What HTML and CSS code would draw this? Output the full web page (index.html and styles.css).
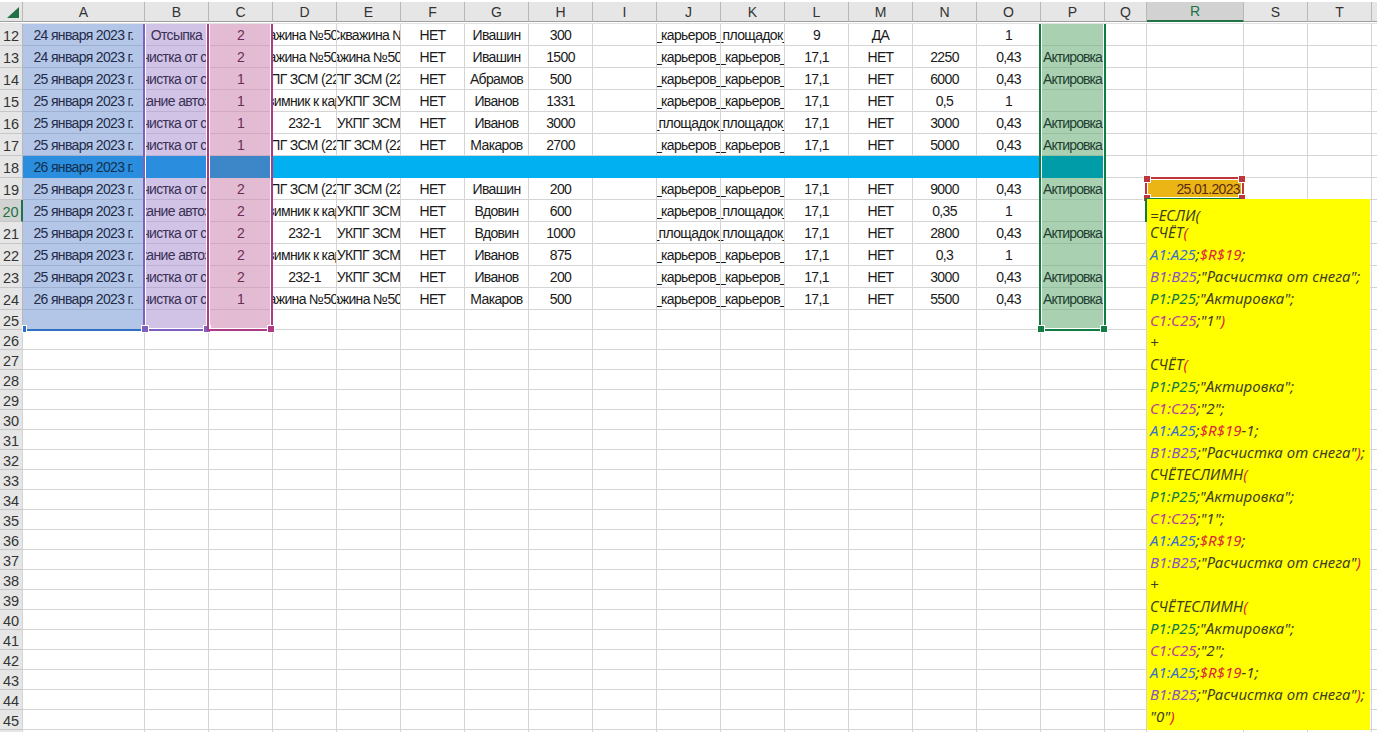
FILE: index.html
```html
<!DOCTYPE html>
<html lang="ru">
<head>
<meta charset="UTF-8"/>
<title>Лист Excel</title>
<link rel="stylesheet" href="styles.css">
</head>
<body>

<div class="sheet">
  <div class="row head">
    <div class="corner"><svg width="12" height="11" viewBox="0 0 12 11"><path d="M12 0V11H0Z" fill="#217346"/></svg></div>
    <div>A</div><div>B</div><div>C</div><div>D</div><div>E</div><div>F</div><div>G</div><div>H</div><div>I</div><div>J</div><div>K</div><div>L</div><div>M</div><div>N</div><div>O</div><div>P</div><div>Q</div><div class="cur">R</div><div>S</div><div>T</div><div></div>
  </div>

  <div class="row"><div class="num">12</div><div class="a">24 января 2023 г.</div><div class="b">Отсыпка</div><div class="c">2</div><div>Скважина №506-11</div><div>Скважина №</div><div>НЕТ</div><div>Ивашин</div><div>300</div><div></div><div>_карьеров_</div><div>_площадок_</div><div>9</div><div>ДА</div><div></div><div>1</div><div class="p"></div><div></div><div></div><div></div><div></div><div></div></div>
  <div class="row"><div class="num">13</div><div class="a">24 января 2023 г.</div><div class="b">Расчистка от снега</div><div class="c">2</div><div>Скважина №506-11</div><div>Скважина №506-11</div><div>НЕТ</div><div>Ивашин</div><div>1500</div><div></div><div>_карьеров_</div><div>_карьеров_</div><div>17,1</div><div>НЕТ</div><div>2250</div><div>0,43</div><div class="p">Актировка</div><div></div><div></div><div></div><div></div><div></div></div>
  <div class="row"><div class="num">14</div><div class="a">25 января 2023 г.</div><div class="b">Расчистка от снега</div><div class="c">1</div><div>УКПГ ЗСМ (22-1)</div><div>УКПГ ЗСМ (22-1)</div><div>НЕТ</div><div>Абрамов</div><div>500</div><div></div><div>_карьеров_</div><div>_карьеров_</div><div>17,1</div><div>НЕТ</div><div>6000</div><div>0,43</div><div class="p">Актировка</div><div></div><div></div><div></div><div></div><div></div></div>
  <div class="row"><div class="num">15</div><div class="a">25 января 2023 г.</div><div class="b">Содержание автозимника</div><div class="c">1</div><div>Автозимник к карьеру</div><div>УКПГ ЗСМ</div><div>НЕТ</div><div>Иванов</div><div>1331</div><div></div><div>_карьеров_</div><div>_карьеров_</div><div>17,1</div><div>НЕТ</div><div>0,5</div><div>1</div><div class="p"></div><div></div><div></div><div></div><div></div><div></div></div>
  <div class="row"><div class="num">16</div><div class="a">25 января 2023 г.</div><div class="b">Расчистка от снега</div><div class="c">1</div><div>232-1</div><div>УКПГ ЗСМ</div><div>НЕТ</div><div>Иванов</div><div>3000</div><div></div><div>_площадок_</div><div>_площадок_</div><div>17,1</div><div>НЕТ</div><div>3000</div><div>0,43</div><div class="p">Актировка</div><div></div><div></div><div></div><div></div><div></div></div>
  <div class="row"><div class="num">17</div><div class="a">25 января 2023 г.</div><div class="b">Расчистка от снега</div><div class="c">1</div><div>УКПГ ЗСМ (22-1)</div><div>УКПГ ЗСМ (22-1)</div><div>НЕТ</div><div>Макаров</div><div>2700</div><div></div><div>_карьеров_</div><div>_карьеров_</div><div>17,1</div><div>НЕТ</div><div>5000</div><div>0,43</div><div class="p">Актировка</div><div></div><div></div><div></div><div></div><div></div></div>
  <div class="row blue"><div class="num">18</div><div class="a">26 января 2023 г.</div><div class="b"></div><div class="c"></div><div></div><div></div><div></div><div></div><div></div><div></div><div></div><div></div><div></div><div></div><div></div><div></div><div class="p"></div><div class="plain"></div><div class="plain"></div><div class="plain"></div><div class="plain"></div><div class="plain"></div></div>
  <div class="row"><div class="num">19</div><div class="a">25 января 2023 г.</div><div class="b">Расчистка от снега</div><div class="c">2</div><div>УКПГ ЗСМ (22-1)</div><div>УКПГ ЗСМ (22-1)</div><div>НЕТ</div><div>Ивашин</div><div>200</div><div></div><div>_карьеров_</div><div>_карьеров_</div><div>17,1</div><div>НЕТ</div><div>9000</div><div>0,43</div><div class="p">Актировка</div><div></div><div class="date">25.01.2023</div><div></div><div></div><div></div></div>
  <div class="row"><div class="num cur">20</div><div class="a">25 января 2023 г.</div><div class="b">Содержание автозимника</div><div class="c">2</div><div>Автозимник к карьеру</div><div>УКПГ ЗСМ</div><div>НЕТ</div><div>Вдовин</div><div>600</div><div></div><div>_карьеров_</div><div>_площадок_</div><div>17,1</div><div>НЕТ</div><div>0,35</div><div>1</div><div class="p"></div><div></div><div></div><div></div><div></div><div></div></div>
  <div class="row"><div class="num">21</div><div class="a">25 января 2023 г.</div><div class="b">Расчистка от снега</div><div class="c">2</div><div>232-1</div><div>УКПГ ЗСМ</div><div>НЕТ</div><div>Вдовин</div><div>1000</div><div></div><div>_площадок_</div><div>_площадок_</div><div>17,1</div><div>НЕТ</div><div>2800</div><div>0,43</div><div class="p">Актировка</div><div></div><div></div><div></div><div></div><div></div></div>
  <div class="row"><div class="num">22</div><div class="a">25 января 2023 г.</div><div class="b">Содержание автозимника</div><div class="c">2</div><div>Автозимник к карьеру</div><div>УКПГ ЗСМ</div><div>НЕТ</div><div>Иванов</div><div>875</div><div></div><div>_карьеров_</div><div>_карьеров_</div><div>17,1</div><div>НЕТ</div><div>0,3</div><div>1</div><div class="p"></div><div></div><div></div><div></div><div></div><div></div></div>
  <div class="row"><div class="num">23</div><div class="a">25 января 2023 г.</div><div class="b">Расчистка от снега</div><div class="c">2</div><div>232-1</div><div>УКПГ ЗСМ</div><div>НЕТ</div><div>Иванов</div><div>200</div><div></div><div>_карьеров_</div><div>_карьеров_</div><div>17,1</div><div>НЕТ</div><div>3000</div><div>0,43</div><div class="p">Актировка</div><div></div><div></div><div></div><div></div><div></div></div>
  <div class="row"><div class="num">24</div><div class="a">26 января 2023 г.</div><div class="b">Расчистка от снега</div><div class="c">1</div><div>Скважина №506-11</div><div>Скважина №506-11</div><div>НЕТ</div><div>Макаров</div><div>500</div><div></div><div>_карьеров_</div><div>_карьеров_</div><div>17,1</div><div>НЕТ</div><div>5500</div><div>0,43</div><div class="p">Актировка</div><div></div><div></div><div></div><div></div><div></div></div>
  <div class="row low"><div class="num">25</div><div class="a"></div><div class="b"></div><div class="c"></div><div></div><div></div><div></div><div></div><div></div><div></div><div></div><div></div><div></div><div></div><div></div><div></div><div class="p"></div><div></div><div></div><div></div><div></div><div></div></div>

  <div class="blank">
    <div class="lines"><div></div><div></div><div></div><div></div><div></div><div></div><div></div><div></div><div></div><div></div><div></div><div></div><div></div><div></div><div></div><div></div><div></div><div></div><div></div><div></div><div></div><div></div></div>
    <div class="num">26</div><div class="num">27</div><div class="num">28</div><div class="num">29</div><div class="num">30</div>
    <div class="num">31</div><div class="num">32</div><div class="num">33</div><div class="num">34</div><div class="num">35</div>
    <div class="num">36</div><div class="num">37</div><div class="num">38</div><div class="num">39</div><div class="num">40</div>
    <div class="num">41</div><div class="num">42</div><div class="num">43</div><div class="num">44</div><div class="num">45</div>
    <div class="num"></div>
  </div>

  <!-- рамки выделения поверх таблицы -->
  <div class="sel sel-a"><i class="dot dl"></i></div>
  <div class="sel sel-b"><i class="dot dl"></i><i class="dot dr"></i></div>
  <div class="sel sel-c"><i class="dot dr"></i></div>
  <div class="sel sel-p"><i class="dot dl"></i><i class="dot dr"></i></div>
  <div class="sel sel-r"><i class="dot tl"></i><i class="dot tr"></i><i class="dot dl"></i><i class="dot dr"></i></div>
  <div class="active"></div>

  <div class="note">
    <div class="first">=ЕСЛИ(</div>
    <div>СЧЁТ<s>(</s></div>
    <div><b class="ca">A1:A25</b>;<s>$R$19</s>;</div>
    <div><b class="cb">B1:B25</b>;"Расчистка от снега";</div>
    <div><b class="cp">P1:P25</b>;"Актировка";</div>
    <div><b class="cc">C1:C25</b>;"1"<s>)</s></div>
    <div>+</div>
    <div>СЧЁТ<s>(</s></div>
    <div><b class="cp">P1:P25</b>;"Актировка";</div>
    <div><b class="cc">C1:C25</b>;"2";</div>
    <div><b class="ca">A1:A25</b>;<s>$R$19</s>-1;</div>
    <div><b class="cb">B1:B25</b>;"Расчистка от снега"<s>)</s>;</div>
    <div>СЧЁТЕСЛИМН<s>(</s></div>
    <div><b class="cp">P1:P25</b>;"Актировка";</div>
    <div><b class="cc">C1:C25</b>;"1";</div>
    <div><b class="ca">A1:A25</b>;<s>$R$19</s>;</div>
    <div><b class="cb">B1:B25</b>;"Расчистка от снега"<s>)</s></div>
    <div>+</div>
    <div>СЧЁТЕСЛИМН<s>(</s></div>
    <div><b class="cp">P1:P25</b>;"Актировка";</div>
    <div><b class="cc">C1:C25</b>;"2";</div>
    <div><b class="ca">A1:A25</b>;<s>$R$19</s>-1;</div>
    <div><b class="cb">B1:B25</b>;"Расчистка от снега"<s>)</s>;</div>
    <div>"0"<s>)</s></div>
  </div>
</div>

</body>
</html>
```
FILE: styles.css
```css
:root {
  --grid: #d4d4d4;
  --tracks: 23px 122px repeat(15, 64px) 42px 97px 64px 64px 6px;
}
html, body { margin: 0; padding: 0; height: 100%; overflow: hidden; background: #fff; }
.sheet {
  position: relative; width: 1377px; height: 732px; overflow: hidden;
  padding-top: 2px; box-sizing: border-box;
  font-family: "Liberation Sans", Arial, sans-serif; font-size: 14px; letter-spacing: -.65px; color: #1a1a1a;
}
.row { display: grid; grid-template-columns: var(--tracks); height: 22px; }
.row > div {
  display: flex; align-items: center; justify-content: center;
  overflow: hidden; white-space: nowrap;
  border-right: 1px solid var(--grid); border-bottom: 1px solid var(--grid);
  box-sizing: border-box;
}
.row.low { height: 20px; }

/* шапка колонок */
.head { height: 20px; position: relative; z-index: 5; margin-bottom: 2px; box-shadow: 0 1px 0 #fff, 0 2px 0 #e2e2e2; }
.head > div {
  background: #e6e6e6; color: #333; letter-spacing: 0;
  border-right: 1px solid #b8b8b8; border-bottom: 1px solid #9e9e9e;
}
.head .corner { justify-content: flex-end; align-items: flex-end; padding: 0 3px 3px 0; }
.head .cur { background: #d2d2d2; color: #217346; border-bottom: 2px solid #217346; }

/* номера строк */
.num {
  background: #e6e6e6; color: #333; letter-spacing: 0; font-size: 14.5px;
  display: flex; align-items: center; justify-content: center;
  border-right: 1px solid #b8b8b8; border-bottom: 1px solid #c6c6c6;
  box-sizing: border-box; padding-top: 2px;
}
.row > .num { border-right-color: #b8b8b8; border-bottom-color: #c6c6c6; }
.num.cur, .row > .num.cur { background: #d2d2d2; color: #217346; border-right: 2px solid #217346; }

/* закрашенные колонки */
.row > .a { background: #b4c6e7; border-color: #9db0d0; color: #232c49; }
.row > .b { background: #d0c3e6; border-color: #bdb0d4; color: #3b2f54; }
.row > .c { background: #e3bcd4; border-color: #d2abc3; color: #6d2c52; }
.row > .p { background: #a9d1b1; border-color: #96bea0; color: #1f4030; letter-spacing: -.9px; }

.blue > div { background: #00b0f0; border-color: #00b0f0; }
.row.blue > .a, .row.blue > .b { background: #2a8ddd; border-color: #2a8ddd; color: #14304f; }
.row.blue > .c { background: #3d87c8; border-color: #3d87c8; }
.row.blue > .p { background: #009da9; border-color: #009da9; }
.row.blue > .plain { background: #fff; border-color: var(--grid); }
.row.blue > .num { background: #e6e6e6; }
.row > .date { background: #ebb515; justify-content: flex-end; padding-right: 3px; color: #5a2a10; }

/* пустая часть листа */
.blank {
  display: grid; grid-template-columns: 23px; grid-auto-rows: 20px;
  background: linear-gradient(var(--grid) 1px, transparent 1px) 0 19px / 100% 20px;
  position: relative;
}
.lines { position: absolute; inset: 0; display: grid; grid-template-columns: var(--tracks); }
.lines div { border-right: 1px solid var(--grid); }

/* рамки выделения */
.sel { position: absolute; box-sizing: border-box; z-index: 3; border: 2px solid; border-top: 0; top: 10px; height: 321px; box-shadow: inset 0 0 0 1px #fff; }
.sel-a { left: 23px; width: 122px; border-width: 0 0 2px; border-color: #2f6fc4; box-shadow: none; }
.sel-b { left: 143px; width: 66px; border-color: #7f5fc0; }
.sel-c { left: 207px; width: 66px; border-color: #7f5fc0 #ae3a86 #ae3a86; }
.sel-p { left: 1039px; width: 67px; border-color: #107c41; }
.sel-r { left: 1145px; top: 177px; width: 99px; height: 23px; border: 2px solid #c0343c; }
.active { position: absolute; z-index: 3; left: 1145px; top: 198px; width: 96px; height: 24px; box-sizing: border-box; border-top: 2px solid #107c41; border-left: 2px solid #107c41; }
.dot { position: absolute; width: 6px; height: 6px; outline: 1px solid #fff; }
.sel-a .dot { background: #2f6fc4; width: 3px; left: 0; }
.sel-b .dot { background: #7f5fc0; }
.sel-c .dot { background: #ae3a86; }
.sel-p .dot { background: #107c41; }
.sel-r .dot { background: #c0343c; }
.dl { left: -3px; bottom: -3px; }
.dr { right: -3px; bottom: -3px; }
.tl { left: -3px; top: -3px; }
.tr { right: -3px; top: -3px; }

/* примечание с формулой */
.note {
  position: absolute; z-index: 4; left: 1147px; top: 199px; width: 223px; height: 531px;
  background: #ff0; box-sizing: border-box; padding: 6px 0 0 3px;
  font-family: "Noto Sans", sans-serif; font-style: italic; font-size: 15px; letter-spacing: .05px; color: #3f3f22;
}
.note div { height: 22px; line-height: 22px; white-space: nowrap; }
.note .first { height: 16px; line-height: 20px; }
.note b { font-weight: normal; }
.note s { text-decoration: none; color: #d9263a; }
.ca { color: #3a6fd0; }
.cb { color: #8a55c0; }
.cc { color: #b9409a; }
.cp { color: #107c41; }
```
